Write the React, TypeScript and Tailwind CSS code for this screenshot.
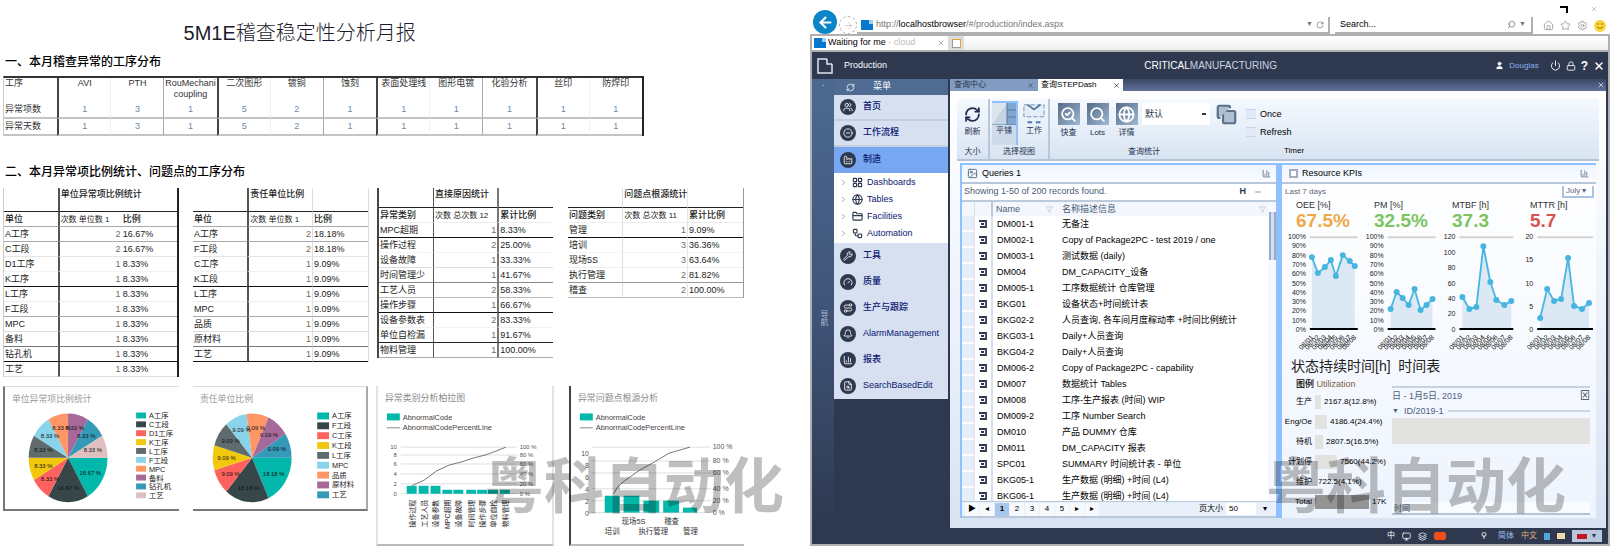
import React from "react";
import {
  ArrowLeft, ArrowRight, X, RotateCw, Search, Home, Star, Settings, User, Power, Lock,
  RefreshCw, Globe, FolderClosed, LayoutGrid, Wrench, Gauge, Route, Bell, BarChart3,
  FileSearch, Users, CircleMinus, Factory, Image as ImageIcon, Filter, Minus, Layers,
  ChevronRight, Monitor, CopyPlus, SearchCheck, Workflow,
} from "lucide-react";

const COLORS = ["#01b8aa", "#374649", "#fd625e", "#f2c80f", "#5f6b6d", "#8ad4eb", "#fe9666", "#a66999", "#3599b8", "#dfbfbf"];

const steps = ["AVI", "PTH", "RouMechani coupling", "二次图形", "镀铜", "蚀刻", "表面处理线", "图形电镀", "化验分析", "丝印", "防焊印"];
const counts = [1, 3, 1, 5, 2, 1, 1, 1, 1, 1, 1];

type Row = [string, number, string];
type Stat = { title: string; head: [string, string, string]; rows: Row[]; tall: boolean; grid: string; lines: string[] };

const stats: Stat[] = [
  {
    title: "单位异常项比例统计", head: ["单位", "次数 单位数 1", "比例"], tall: true, grid: "border-l border-l-[#ccc] border-r-2 border-r-[#222]",
    rows: [["A工序", 2, "16.67%"], ["C工段", 2, "16.67%"], ["D1工序", 1, "8.33%"], ["K工序", 1, "8.33%"], ["L工序", 1, "8.33%"], ["F工段", 1, "8.33%"], ["MPC", 1, "8.33%"], ["备料", 1, "8.33%"], ["钻孔机", 1, "8.33%"], ["工艺", 1, "8.33%"]],
    lines: ["border-b-[#aaa]", "border-b-[#aaa]", "border-b-[#e5e5e5]", "border-b-[#f2f2f2]", "border-b-[#111]", "border-b-[#eee]", "border-b-[#aaa]", "border-b-[#ddd]", "border-b-[#777]", "border-b-[#111]", "border-b-[#ddd]"],
  },
  {
    title: "责任单位比例", head: ["单位", "次数 单位数 1", "比例"], tall: true, grid: "border-r border-r-[#ddd]",
    rows: [["A工序", 2, "18.18%"], ["F工段", 2, "18.18%"], ["C工序", 1, "9.09%"], ["K工段", 1, "9.09%"], ["L工序", 1, "9.09%"], ["MPC", 1, "9.09%"], ["品质", 1, "9.09%"], ["原材料", 1, "9.09%"], ["工艺", 1, "9.09%"]],
    lines: ["border-b-[#aaa]", "border-b-[#aaa]", "border-b-[#e5e5e5]", "border-b-[#f2f2f2]", "border-b-[#111]", "border-b-[#eee]", "border-b-[#aaa]", "border-b-[#ddd]", "border-b-[#777]", "border-b-[#111]"],
  },
  {
    title: "直接原因统计", head: ["异常类别", "次数 总次数 12", "累计比例"], tall: false, grid: "border-l-2 border-l-[#444]",
    rows: [["MPC超期", 1, "8.33%"], ["操作过程", 2, "25.00%"], ["设备故障", 1, "33.33%"], ["时间管理少", 1, "41.67%"], ["工艺人员", 2, "58.33%"], ["操作步骤", 1, "66.67%"], ["设备参数表", 2, "83.33%"], ["单位自检漏", 1, "91.67%"], ["物料管理", 1, "100.00%"]],
    lines: ["border-b-[#eee]", "border-b-[#111]", "border-b-[#f5f5f5]", "border-b-[#ddd]", "border-b-[#888]", "border-b-[#bbb]", "border-b-[#111]", "border-b-[#f2f2f2]", "border-b-[#222]", "border-b-[#aaa]"],
  },
  {
    title: "问题点根源统计", head: ["问题类别", "次数 总次数 11", "累计比例"], tall: false, grid: "border-r border-r-[#999]",
    rows: [["管理", 1, "9.09%"], ["培训", 3, "36.36%"], ["现场5S", 3, "63.64%"], ["执行管理", 2, "81.82%"], ["稽查", 2, "100.00%"]],
    lines: ["border-b-[#eee]", "border-b-[#111]", "border-b-[#f5f5f5]", "border-b-[#eee]", "border-b-[#999]", "border-b-[#bbb]"],
  },
];

function StatTable({ s, wide }: { s: Stat; wide: boolean }) {
  const mid = s.tall ? "border-l-2 border-l-[#555]" : wide ? "border-l border-l-[#555]" : "border-l border-l-[#ddd]";
  const last = s.tall ? (s.rows.length === 10 ? "" : "border-l border-l-[#ddd]") : wide ? "border-l-2 border-l-[#777]" : "border-l border-l-[#e5e5e5]";
  return (
    <table className={`w-full table-fixed border-separate border-spacing-0 text-[9px] leading-[13px] text-[#222] ${s.grid}`}>
      <colgroup>
        <col className="w-[31%]" />
        <col className="w-[37%]" />
        <col className="w-[32%]" />
      </colgroup>
      <thead>
        <tr className={s.tall ? "h-[24px]" : "h-[20px]"}>
          <th className="border-b border-b-[#222] p-0" />
          <th className={`whitespace-nowrap border-b border-b-[#222] p-0 pl-px text-left align-top font-medium ${mid}`}>{s.title}</th>
          <th className={`border-b border-b-[#222] p-0 ${last}`} />
        </tr>
        <tr className="h-[15px]">
          <th className={`whitespace-nowrap border-b p-0 pl-px text-left font-medium ${s.lines[0]}`}>{s.head[0]}</th>
          <th className={`whitespace-nowrap border-b p-0 pl-px text-left text-[8px] font-normal ${s.lines[0]} ${mid}`}>{s.head[1]}</th>
          <th className={`whitespace-nowrap border-b p-0 pl-px text-left font-medium ${s.lines[0]} ${last}`}>{s.head[2]}</th>
        </tr>
      </thead>
      <tbody>
        {s.rows.map((r, i) => (
          <tr key={r[0]} className="h-[15px]">
            <td className={`whitespace-nowrap border-b p-0 pl-px ${s.lines[i + 1]}`}>{r[0]}</td>
            <td className={`border-b p-0 pr-px text-right text-[#7a6a5a] ${s.lines[i + 1]} ${mid}`}>{r[1]}</td>
            <td className={`border-b p-0 pl-px ${s.lines[i + 1]} ${last}`}>{r[2]}</td>
          </tr>
        ))}
      </tbody>
    </table>
  );
}

function Pie({ title, rows, step, sx, sw }: { title: string; rows: Row[]; step: number; sx: number; sw: number }) {
  const total = rows.reduce((a, r) => a + r[1], 0);
  const cx = sx === 133 ? 64 : 60;
  const cy = 71;
  let at = 0;
  const parts = rows.map((r, i) => {
    const a0 = (at / total) * Math.PI * 2;
    at += r[1];
    const a1 = (at / total) * Math.PI * 2;
    const m = (a0 + a1) / 2;
    return { r, i, m, d: `M${cx} ${cy}L${cx + 40 * Math.cos(a0)} ${cy + 45 * Math.sin(a0)}A40 45 0 0 1 ${cx + 40 * Math.cos(a1)} ${cy + 45 * Math.sin(a1)}Z` };
  });
  return (
    <svg viewBox="0 0 176 122" className="block h-[122px] w-full" role="img" aria-label={title}>
      <text x="7" y="14" fontSize="9" fill="#9a9a9a">{title}</text>
      {parts.map((p) => <path key={p.i} d={p.d} fill={COLORS[p.i]} />)}
      {parts.map((p) => (
        <text key={p.i} x={cx + 26 * Math.cos(p.m)} y={cy + 2 + 31 * Math.sin(p.m)} fontSize="6" textAnchor="middle" fill="#111">{p.r[2].replace("%", " %")}</text>
      ))}
      {rows.map((r, i) => (
        <g key={i}>
          <rect x={sx} y={25 + i * step} width={sw} height={step - 3} fill={COLORS[i]} />
          <text x={sx + sw + 3} y={31 + i * step} fontSize="7.5" fill="#222">{r[0]}</text>
        </g>
      ))}
    </svg>
  );
}

function ParetoHead({ title }: { title: string }) {
  return (
    <g>
      <text x="7" y="14" fontSize="9" fill="#8a8a8a">{title}</text>
      <rect x="9" y="27" width="13" height="7" fill="#01b8aa" />
      <text x="25" y="34" fontSize="7.5" fill="#444">AbnormalCode</text>
      <path d="M9 41.500h13" stroke="#888" />
      <text x="25" y="44" fontSize="7.5" fill="#444">AbnormalCodePercentLine</text>
    </g>
  );
}

function ParetoA() {
  const xs = [29, 41, 53, 65, 76, 89, 100, 111, 123];
  const names = ["操作过程", "工艺人员", "设备参数", "MPC超期", "设备故障", "时间管理", "操作步骤", "单位自检", "物料管理"];
  return (
    <svg viewBox="0 0 175 158" className="block h-[158px] w-full" role="img" aria-label="异常类别分析">
      <ParetoHead title="异常类别分析柏拉图" />
      {[61, 69, 78, 88, 98, 108].map((y, i) => (
        <g key={y}>
          <path d={`M23 ${y}h117`} stroke="#dedede" />
          <text x="19" y={y + 2} fontSize="6" textAnchor="end" fill="#555">{10 - i * 2}</text>
          <text x="143" y={y + 2} fontSize="6" fill="#555">{`${100 - i * 20} %`}</text>
        </g>
      ))}
      {xs.map((x, i) => (
        <g key={x}>
          <rect x={x} y={i < 3 ? 100 : 104} width="10" height={i < 3 ? 8 : 4} fill="#01b8aa" />
          <text transform={`translate(${x + 8} 114) rotate(-90)`} fontSize="7" textAnchor="end" fill="#222">{names[i]}</text>
        </g>
      ))}
      <path d="M34 100L47 94L59 85L72 79L84 76L96 72L108 69L119 65L129 61" fill="none" stroke="#555" strokeWidth=".8" />
    </svg>
  );
}

function ParetoB() {
  const bars = [[34, 110, 15], [53, 110, 16], [73, 115, 16], [93, 115, 16], [113, 122, 14]];
  return (
    <svg viewBox="0 0 175 158" className="block h-[158px] w-full" role="img" aria-label="问题点根源分析">
      <ParetoHead title="异常问题点根源分析" />
      {[61, 75, 87, 103, 115, 127].map((y, i) => (
        <g key={y}>
          <path d={`M21 ${y}h120`} stroke="#dedede" />
          <text x="143" y={y + 2} fontSize="7" fill="#555">{`${100 - i * 20} %`}</text>
        </g>
      ))}
      {[67, 79, 91, 103, 115, 127].map((y, i) => <text key={y} x="18" y={y + 3} fontSize="7" textAnchor="end" fill="#555">{10 - i * 2}</text>)}
      {bars.map(([x, y, w]) => <rect key={x} x={x} y={y} width={w} height={127 - y} fill="#01b8aa" />)}
      <path d="M43 108L47 101L54 95L68 85L84 76L99 67L120 61" fill="none" stroke="#555" strokeWidth=".8" />
      <g fontSize="7.5" fill="#333">
        <text x="51" y="139">现场5S</text>
        <text x="94" y="139">稽查</text>
        <text x="34" y="149">培训</text>
        <text x="68" y="149">执行管理</text>
        <text x="113" y="149">管理</text>
      </g>
    </svg>
  );
}

function Watermark({ place }: { place: string }) {
  return <div aria-hidden="true" className={`pointer-events-none absolute whitespace-nowrap text-[60px] font-bold leading-[60px] text-black/25 ${place}`}>粤科自动化</div>;
}

function Report() {
  return (
    <section className="relative min-w-0 pt-[20px]">
      <h1 className="w-[74%] text-center text-[20px] font-light leading-[26px] text-[#1c1c2c]">5M1E稽查稳定性分析月报</h1>
      <h2 className="mt-[8px] pl-[5px] text-[12px] font-medium leading-[17px]">一、本月稽查异常的工序分布</h2>
      <div className="pl-[3px] pr-[166px] pt-[5px]">
        <table className="w-full table-fixed border-separate border-spacing-0 border-l border-r-2 border-t-2 border-l-[#ccc] border-r-[#222] border-t-[#333] text-[9px] leading-[11px] text-[#333]">
          <thead>
            <tr className="h-[24px] align-top">
              <th className="p-0 pl-px text-left font-normal">工序</th>
              {steps.map((s, i) => <th key={s} className={`p-0 text-center font-normal ${i % 3 === 1 ? "border-l border-l-[#f0f0f0]" : i % 3 === 0 ? "border-l-2 border-l-[#444]" : "border-l border-l-[#aaa]"}`}>{s}</th>)}
            </tr>
          </thead>
          <tbody>
            {["异常项数", "异常天数"].map((n) => (
              <tr key={n} className="h-[17px]">
                <td className="border-b-2 border-b-[#c4c4c4] p-0 pl-px">{n}</td>
                {counts.map((c, i) => <td key={i} className={`border-b-2 border-b-[#c4c4c4] p-0 text-center text-[#6a8bab] ${i % 3 === 1 ? "border-l border-l-[#f0f0f0]" : i % 3 === 0 ? "border-l-2 border-l-[#444]" : "border-l border-l-[#aaa]"}`}>{c}</td>)}
              </tr>
            ))}
          </tbody>
        </table>
      </div>
      <h2 className="mt-[28px] pl-[5px] text-[12px] font-medium leading-[17px]">二、本月异常项比例统计、问题点的工序分布</h2>
      <div className="mt-[7px] flex h-[198px] items-start pl-[3px] pr-[66px]">
        {stats.map((s, i) => (
          <div key={s.title} className={`min-w-0 flex-1 ${["", "ml-[14px]", "ml-[8px]", "ml-[15px]"][i]}`}>
            <StatTable s={s} wide={i === 2} />
          </div>
        ))}
      </div>
      <div className="flex items-start pl-[3px] pr-[66px]">
        <div className="min-w-0 flex-1 border-b-2 border-l-2 border-t border-b-[#777] border-l-[#777] border-t-[#ddd]"><Pie title="单位异常项比例统计" rows={stats[0].rows} step={9} sx={133} sw={10} /></div>
        <div className="ml-[14px] min-w-0 flex-1 border-b-2 border-r-2 border-t border-b-[#777] border-r-[#aaa] border-t-[#ddd]"><Pie title="责任单位比例" rows={stats[1].rows} step={10} sx={126} sw={12} /></div>
        <div className="ml-[8px] min-w-0 flex-1 border-x-2 border-b-2 border-x-[#e2e2e2] border-b-[#bbb]"><ParetoA /></div>
        <div className="ml-[15px] min-w-0 flex-1 border-b-2 border-l-2 border-b-[#bbb] border-l-[#444]"><ParetoB /></div>
      </div>
      <Watermark place="right-[26px] bottom-[38px]" />
    </section>
  );
}

const menuTop = [["首页", Users], ["工作流程", CircleMinus], ["制造", Factory]] as const;
const menuSub = [["Dashboards", LayoutGrid], ["Tables", Globe], ["Facilities", FolderClosed], ["Automation", Workflow]] as const;
const menuRest = [["工具", Wrench], ["质量", Gauge], ["生产与跟踪", Route], ["AlarmManagement", Bell], ["报表", BarChart3], ["SearchBasedEdit", FileSearch]] as const;

function MenuItem({ label, Icon, active }: { label: string; Icon: React.ElementType; active?: boolean }) {
  return (
    <a href="#menu" className={`flex h-[26px] items-center gap-[7px] overflow-hidden whitespace-nowrap pl-[6px] text-[9px] font-medium text-[#0b1570] ${active ? "bg-[#77a7f0]" : "bg-[#d6e0f1]"}`}>
      <span className="flex size-[16px] shrink-0 items-center justify-center rounded-full bg-[#2e3950] text-white"><Icon size={10} /></span>
      {label}
    </a>
  );
}

const records = [
  ["DM001-1", "无备注"], ["DM002-1", "Copy of Package2PC - test 2019 / one"], ["DM003-1", "测试数据 (daily)"], ["DM004", "DM_CAPACITY_设备"],
  ["DM005-1", "工序数据统计 仓库管理"], ["BKG01", "设备状态+时间统计表"], ["BKG02-2", "人员查询, 各车间月度稼动率 +时间比例统计"], ["BKG03-1", "Daily+人员查询"],
  ["BKG04-2", "Daily+人员查询"], ["DM006-2", "Copy of Package2PC - capability"], ["DM007", "数据统计 Tables"], ["DM008", "工序-生产报表 (时间) WIP"],
  ["DM009-2", "工序 Number Search"], ["DM010", "产品 DUMMY 仓库"], ["DM011", "DM_CAPACITY 报表"], ["SPC01", "SUMMARY 时间统计表 - 单位"],
  ["BKG05-1", "生产数据 (明细) +时间 (L4)"], ["BKG06-1", "生产数据 (明细) +时间 (L4)"],
];

function Records() {
  return (
    <section className="flex min-w-0 flex-1 flex-col border-l-2 border-r-2 border-t-2 border-[#8fc0ff] bg-white">
      <header className="flex h-[19px] items-center gap-[4px] border-b-2 border-[#b9c6da] bg-gradient-to-b from-[#eff5ff] to-[#f9fbff] px-[5px] text-[9px]">
        <ImageIcon size={11} className="text-[#50607a]" />
        <span className="flex-1">Queries 1</span>
        <BarChart3 size={9} className="text-[#50607a]" />
      </header>
      <div className="flex h-[18px] items-center gap-[8px] border-b-2 border-[#bccad9] px-[2px] text-[9px] text-[#4a5b75]">
        <span className="flex-1 whitespace-nowrap">Showing 1-50 of 200 records found.</span>
        <span className="font-bold text-[#2e3950]">H</span>
        <Minus size={8} className="mr-[12px]" />
      </div>
      <div className="flex h-[299px] overflow-hidden">
        <table className="w-full table-fixed border-separate border-spacing-0 self-start text-[9px] leading-[12px]">
          <colgroup>
            <col className="w-[13px]" />
            <col className="w-[18px]" />
            <col className="w-[66px]" />
            <col />
          </colgroup>
          <thead>
            <tr className="h-[14px] bg-[#f3f7fd] text-[#4a5b75]">
              <th aria-label="标记" className="border-r border-[#d5dfef] p-0" />
              <th aria-label="选择" className="border-r-2 border-[#bccad9] p-0" />
              <th className="p-0 pl-[3px] text-left font-normal"><span className="flex items-center justify-between pr-[6px]">Name<Filter size={7} className="text-[#a9bbd2]" /></span></th>
              <th className="p-0 pl-[3px] text-left font-normal"><span className="flex items-center justify-between pr-[2px]">名称描述信息<Filter size={7} className="text-[#a9bbd2]" /></span></th>
            </tr>
          </thead>
          <tbody>
            {records.map((r) => (
              <tr key={r[0]} className="h-[16px]">
                <td className="border-b-2 border-r-2 border-b-white border-r-[#e5e5ea] bg-[#e6edfb] p-0" />
                <td className="border-r-2 border-[#d3e1f5] p-0">
                  <svg viewBox="0 0 8 8" className="mx-auto size-[8px]" aria-hidden="true"><path d="M0 1h7v6H1M2 4h3" fill="none" stroke="#2e3950" strokeWidth="1.800" /></svg>
                </td>
                <td className="whitespace-nowrap p-0 pl-[4px]">{r[0]}</td>
                <td className="overflow-hidden whitespace-nowrap p-0 pl-[3px]">{r[1]}</td>
              </tr>
            ))}
          </tbody>
        </table>
        <div className="flex w-[8px] shrink-0 flex-col items-center bg-[#f5f8fe] pt-[10px]"><div className="h-[48px] w-[7px] border-x-2 border-[#9aabc4] bg-[#d3dff0]" /></div>
      </div>
      <footer className="flex h-[17px] items-center gap-px border-b-2 border-t border-[#b9c9dd] bg-[#e9f0fa] px-[3px] text-[8px]">
        {["▶", "◂", "1", "2", "3", "4", "5", "▸", "▸"].map((p, i) => (
          <button key={i} className={`h-[13px] w-[14px] leading-[12px] ${i === 2 ? "bg-[#a9c6ec] font-bold" : "bg-[#f7f9fd]"}`}>{p}</button>
        ))}
        <label className="ml-auto flex items-center gap-[3px] text-[8px]">页大小<input defaultValue="50" className="h-[12px] w-[30px] bg-white px-[3px] text-[8px]" /></label>
        <button className="mx-[6px]">▾</button>
      </footer>
    </section>
  );
}

type Kpi = { label: string; value: string; tone: string; x0: number; x1: number; ticks: string[]; pts: number[][] };
const pct = ["100%", "90%", "80%", "70%", "60%", "50%", "40%", "30%", "20%", "10%", "0%"];
const kpis: Kpi[] = [
  { label: "OEE [%]", value: "67.5%", tone: "text-[#f0a94a]", x0: 28, x1: 76, ticks: pct, pts: [[30, 25], [36, 41], [43, 35], [49, 28], [54, 44], [61, 23], [68, 29], [73, 34]] },
  { label: "PM [%]", value: "32.5%", tone: "text-[#7cc462]", x0: 106, x1: 154, ticks: pct, pts: [[109, 77], [115, 60], [121, 66], [127, 73], [133, 57], [139, 78], [145, 73], [151, 67]] },
  { label: "MTBF [h]", value: "37.3", tone: "text-[#7cc462]", x0: 178, x1: 232, ticks: ["120", "100", "80", "60", "40", "20", "0"], pts: [[181, 65], [188, 77], [195, 75], [202, 14], [209, 50], [215, 68], [223, 73], [230, 69]] },
  { label: "MTTR [h]", value: "5.7", tone: "text-[#d9534f]", x0: 256, x1: 312, ticks: ["20", "15", "10", "5", "0"], pts: [[259, 86], [266, 57], [273, 69], [280, 67], [287, 26], [293, 74], [301, 77], [308, 71]] },
];

function KpiCharts() {
  return (
    <svg viewBox="0 0 315 125" className="block h-[125px] w-full" role="img" aria-label="KPI">
      {kpis.map((k) => (
        <g key={k.label} transform="translate(0 1)">
          <path d={`M${k.x0} 5h${k.x1 - k.x0}`} stroke="#d3d3d3" strokeWidth="2" />
          <path d={`M${k.pts.map((p) => p.join(" ")).join("L")}L${k.pts[7][0]} 96L${k.pts[0][0]} 96Z`} fill="#dce9f5" />
          <path d={`M${k.x0} 97h${k.x1 - k.x0}`} stroke="#000" strokeWidth="2" />
          <path d={`M${k.pts.map((p) => p.join(" ")).join("L")}`} fill="none" stroke="#46b5e0" strokeWidth="1.800" />
          {k.pts.map((p) => <circle key={p[0]} cx={p[0]} cy={p[1]} r="3" fill="#46b5e0" />)}
          {k.ticks.map((t, i) => <text key={t} x={k.x0 - 4} y={7 + (i * 93) / (k.ticks.length - 1)} fontSize="7" fontWeight="500" textAnchor="end" fill="#222">{t}</text>)}
          {k.pts.map((p, i) => <text key={p[0]} transform={`translate(${p[0] + 2} 106) rotate(-45)`} fontSize="7" textAnchor="end" fill="#111">{`08/0${i + 1}`}</text>)}
        </g>
      ))}
    </svg>
  );
}

const states = [
  ["生产", "w-[6px] bg-[#e2e2e0]", "2167.8(12.8%)"], ["Eng/Oe", "w-[12px] bg-[#e2e2e0]", "4186.4(24.4%)"], ["待机", "w-[8px] bg-[#e2e2e0]", "2807.5(16.5%)"],
  ["计划停", "w-[22px] bg-[#e2e2e0]", "7560(44.2%)"], ["维护", "w-0", "722.5(4.1%)"], ["Total", "w-[54px] bg-[#949494]", "17K"],
];

function Kpis() {
  return (
    <section className="flex min-w-0 flex-1 flex-col border-l-2 border-t-2 border-[#8fc0ff] bg-gradient-to-b from-white to-[#eef4fe]">
      <header className="flex h-[19px] items-center gap-[4px] border-b-2 border-[#b9c6da] bg-gradient-to-b from-[#eff5ff] to-[#f9fbff] px-[7px] text-[9px]">
        <span className="size-[9px] border-2 border-[#a3adbd] bg-white" />
        <span className="flex-1">Resource KPIs</span>
        <BarChart3 size={9} className="text-[#50607a]" />
      </header>
      <div className="flex h-[16px] items-center justify-between pl-[3px] pr-[2px] text-[8px] text-[#5a6478]">
        <span>Last 7 days</span>
        <select aria-label="周期" className="h-[12px] w-[32px] appearance-none border-x-2 border-b-2 border-[#a9c3e3] bg-white px-[2px] text-[8px] leading-[10px]"><option>July ▾</option></select>
      </div>
      <div className="grid grid-cols-[78fr_78fr_78fr_66fr] pl-[14px]">
        {kpis.map((k) => (
          <div key={k.label}>
            <div className="text-[9px] font-medium leading-[11px] text-[#333]">{k.label}</div>
            <div className={`text-[19px] font-bold leading-[20px] ${k.tone}`}>{k.value}</div>
          </div>
        ))}
      </div>
      <KpiCharts />
      <h3 className="pl-[9px] text-[14px] leading-[20px] text-[#222]">状态持续时间[h]&nbsp; 时间表</h3>
      <div className="flex flex-1">
        <div className="w-[108px] shrink-0 text-[9px] leading-[12px]">
          <div className="flex h-[16px] items-center whitespace-nowrap pl-[14px] font-medium">图例&nbsp;<span className="font-normal text-[#7a6048]">Utilization</span></div>
          {states.map((s) => (
            <div key={s[0]} className="flex h-[20px] items-center whitespace-nowrap">
              <span className="w-[30px] shrink-0 text-right text-[8px]">{s[0]}</span>
              <span className={`ml-[3px] h-[14px] shrink-0 ${s[1]}`} />
              <span className="ml-[3px] text-[8px]">{s[2]}</span>
            </div>
          ))}
        </div>
        <div className="flex min-w-0 flex-1 flex-col pl-[2px] pr-[6px] pt-[10px] text-[9px] leading-[12px] text-[#4b6080]">
          <div className="flex h-[17px] items-center justify-between border-t-2 border-[#c6d2e2]"><span>日 - 1月5日, 2019</span><span className="text-[10px] text-[#2e3950]">⊠</span></div>
          <div className="flex h-[15px] items-center gap-[5px]"><span className="text-[7px]">▼</span>ID/2019-1<span className="h-[2px] flex-1 bg-[#ccd7e6]" /></div>
          <div className="h-[26px] bg-[#e2e2e0]" />
          <input aria-label="时间" defaultValue="时间" className="mt-auto mb-[3px] h-[13px] w-full border-b-2 border-[#b5c3d3] bg-[#f8fbff] pl-[2px] text-[8px]" />
        </div>
      </div>
    </section>
  );
}

function Ribbon() {
  const lens = [["快查", SearchCheck], ["Lots", Search], ["详情", Globe]] as const;
  return (
    <div className="mx-[7px] mt-[8px] flex h-[62px] border-b-2 border-[#b6c4d6] bg-gradient-to-b from-[#f5f9ff] to-[#d8e4f2] text-[8px] leading-[11px] text-[#23304c]">
      <div className="flex w-[33px] flex-col items-center justify-between border-r-2 border-[#b9c7da] pb-[2px] pt-[7px]">
        <button className="flex flex-col items-center gap-[3px]"><RefreshCw size={17} strokeWidth={2.500} />刷新</button>
        <span>大小</span>
      </div>
      <div className="flex w-[60px] flex-col items-center justify-between border-r-2 border-[#b9c7da] pb-[2px] pt-[2px]">
        <div className="flex gap-[4px]">
          <button className="flex h-[44px] w-[26px] flex-col items-center border-r-2 border-t-2 border-[#8fc0ff] bg-[#cfdbea]">
            <svg viewBox="0 0 24 22" className="h-[22px] w-[24px]" aria-hidden="true"><path d="M0 0h24v22H0z" fill="#dce5ee" /><path d="M15 0h9v22h-9z" fill="#7fa6cd" /><path d="M0 22L15 0v22z" fill="#c6d3e0" /><path d="M15 0v22M15 7h9M15 14h9M0 22h24" stroke="#557ba3" /></svg>
            平铺
          </button>
          <button className="flex h-[44px] w-[24px] flex-col items-center pt-[2px]">
            <svg viewBox="0 0 24 22" className="h-[22px] w-[22px]" aria-hidden="true"><path d="M1 1h22v13H1z" fill="#e4eef8" stroke="#6e8db0" strokeDasharray="5 2" /><path d="M5 1l7 5 7-5M5 20h5M14 20h5" fill="none" stroke="#4e789f" strokeWidth="2" /></svg>
            工作
          </button>
        </div>
        <span>选择视图</span>
      </div>
      <div className="flex w-[188px] flex-col items-center justify-between pb-[2px] pt-[4px]">
        <div className="flex w-full items-start pl-[4px]">
          {lens.map(([n, Icon]) => (
            <button key={n} className="flex w-[29px] flex-col items-center gap-[2px] whitespace-nowrap">
              <span className="flex size-[22px] items-center justify-center bg-gradient-to-br from-[#566b87] to-[#9fb9d4] text-white"><Icon size={17} strokeWidth={2.500} /></span>
              {n}
            </button>
          ))}
          <select aria-label="查询条件" className="ml-px h-[22px] w-[68px] appearance-none bg-white bg-[linear-gradient(#2e3950,#2e3950)] bg-[length:4px_2px] bg-[position:60px_10px] bg-no-repeat pl-[3px] text-[9px]"><option>默认</option></select>
          <button aria-label="图层" className="ml-[5px] flex h-[22px] w-[22px] shrink-0 items-center justify-center text-[#5c7189]"><CopyPlus size={21} strokeWidth={2.500} fill="#aebfd2" /></button>
        </div>
        <span>查询统计</span>
      </div>
      <div className="flex flex-1 flex-col pl-[8px] pt-[10px] text-[9px] text-black">
        {["Once", "Refresh"].map((t) => (
          <label key={t} className="flex h-[18px] items-start gap-[4px]"><input type="checkbox" className="size-[10px] appearance-none border-y border-[#c8d5f0] bg-[#e2e9f9]" />{t}</label>
        ))}
        <span className="ml-[38px] text-[8px]">Timer</span>
      </div>
    </div>
  );
}

function Browser() {
  return (
    <section className="relative min-w-0 pr-[2px]">
      <div className="flex h-[16px] items-end justify-end gap-[22px] pb-[3px] pr-[12px]">
        <svg viewBox="0 0 8 7" className="h-[7px] w-[8px]" aria-hidden="true"><path d="M0 1h7v6" fill="none" stroke="#000" strokeWidth="2" /></svg>
        <X size={8} className="text-[#aaa]" />
      </div>
      <div className="flex h-[18px] items-end text-[9px]">
        <button aria-label="返回" className="ml-[3px] flex size-[24px] shrink-0 items-center justify-center rounded-full bg-[#0a86c8] text-white"><ArrowLeft size={17} strokeWidth={3} /></button>
        <button aria-label="前进" className="ml-[2px] flex size-[18px] shrink-0 items-center justify-center rounded-full border border-dashed border-[#aaa] text-[#ccc]"><ArrowRight size={11} /></button>
        <div className="flex h-[17px] flex-1 items-center gap-[3px] border-b-2 border-r-2 border-[#b0b0b0] pl-[4px] pr-[4px]">
          <span className="h-[10px] w-[12px] shrink-0 bg-[#0878cf]"><span className="ml-auto block size-[4px] bg-[#9bcdf5]" /></span>
          <span className="flex-1 whitespace-nowrap text-[#777]">http://<b className="font-medium text-black">localhostbrowser</b>/#/production/index.aspx</span>
          <span className="text-[7px] text-[#777]">▼</span>
          <RotateCw size={8} className="text-[#777]" />
        </div>
        <div className="ml-[5px] flex h-[17px] w-[198px] shrink-0 items-center border-b-2 border-r-2 border-[#b0b0b0] px-[5px]">
          <input aria-label="Search" placeholder="Search..." className="min-w-0 flex-1 text-[9px] placeholder:text-black" />
          <Search size={9} className="-scale-x-100 text-[#777]" />
          <span className="ml-[3px] text-[7px] text-[#777]">▼</span>
        </div>
        <div className="flex h-[17px] w-[77px] shrink-0 items-center justify-end gap-[6px] pr-[4px] text-[#a0a0a0]">
          <Home size={11} /><Star size={11} /><Settings size={11} />
          <svg viewBox="0 0 12 12" className="size-[12px]" aria-hidden="true"><circle cx="6" cy="6" r="6" fill="#fbd33b" /><path d="M3 4h2M7 4h2M3 7q3 3 6 0" stroke="#9a7910" fill="none" /></svg>
        </div>
      </div>
      <div className="border-2 border-[#b0b0b0]">
        <div className="flex h-[14px] bg-gradient-to-b from-white to-[#efefef] text-[9px]">
          <div className="flex w-[136px] items-center gap-[2px] bg-white pl-[2px] pr-[3px]">
            <span className="h-[10px] w-[12px] bg-[#0878cf]"><span className="ml-auto block size-[4px] bg-[#9bcdf5]" /></span>
            <span className="flex-1 whitespace-nowrap">Waiting for me <span className="text-[#bbb]">- cloud</span></span>
            <X size={8} className="text-[#888]" />
          </div>
          <button aria-label="新标签页" className="flex w-[16px] items-center justify-center bg-[#dcdcdc]"><span className="size-[9px] border border-r-[#e8a530] border-t-[#e8a530] border-b-[#999] border-l-[#999] bg-white" /></button>
        </div>
        <div className="border-t-2 border-[#b0b0b0] bg-[#2e3950]">
          <header className="flex h-[27px] items-center text-white">
            <svg viewBox="0 0 16 16" className="ml-[5px] size-[16px]" aria-hidden="true"><path d="M10 1H1v14h14V6M10 1v5h5" fill="none" stroke="#dfe6f0" strokeWidth="1.500" /></svg>
            <span className="ml-[11px] w-[120px] text-[9px] font-medium">Production</span>
            <span className="flex-1 pr-[38px] text-center text-[10px]"><b className="font-medium">CRITICAL</b><span className="text-[#cbd3e0]">MANUFACTURING</span></span>
            <div className="flex items-center gap-[5px] pr-[3px] text-[8px] text-[#8fb0f0]">
              <User size={9} fill="white" className="text-white" />Douglas
              <Power size={11} className="ml-[6px] text-white" /><Lock size={10} className="text-white" /><b className="text-[12px] text-white">?</b><X size={12} strokeWidth={3} className="text-white" />
            </div>
          </header>
          <div className="flex h-[449px]">
            <div className="flex w-[22px] shrink-0 flex-col items-center bg-gradient-to-b from-[#4c6a90] via-[#40557a] to-[#2e3950] text-[8px] text-[#aebbd0]">
              <span className="mt-[1px] text-white">·</span>
              <span className="mt-[218px] [writing-mode:vertical-rl]">导航</span>
            </div>
            <nav className="w-[114px] shrink-0">
              <div className="flex h-[16px] items-center gap-[18px] bg-[#4f6b92] pl-[12px] text-[9px] text-white"><RefreshCw size={9} />菜单</div>
              <div className="flex flex-col divide-y-2 divide-[#c3cfdf]">
                {menuTop.map(([l, I], i) => <MenuItem key={l} label={l} Icon={I} active={i === 2} />)}
              </div>
              <div className="bg-white py-px">
                {menuSub.map(([l, I]) => (
                  <a key={l} href="#sub" className="flex h-[17px] items-center gap-[4px] pl-[5px] text-[9px] text-[#0b1570]">
                    <ChevronRight size={9} className="text-[#888]" /><I size={11} strokeWidth={2.500} className="text-[#2e3950]" />{l}
                  </a>
                ))}
              </div>
              {menuRest.map(([l, I]) => <MenuItem key={l} label={l} Icon={I} />)}
            </nav>
            <main className="ml-[2px] mr-[2px] flex min-w-0 flex-1 flex-col bg-[#d8e3f2]">
              <div className="flex h-[12px] items-center whitespace-nowrap bg-gradient-to-b from-[#3a4764] to-[#61719a] text-[8px] leading-[12px]">
                <div className="flex h-full w-[88px] items-center justify-between bg-[#829cc1] px-[4px] text-[#26334d]"><span>查询中心</span><X size={7} /></div>
                <div className="flex h-full w-[85px] items-center justify-between bg-white px-[3px] text-black"><span>查询STEPDash</span><X size={7} /></div>
                <X size={8} className="ml-auto mr-px text-white" />
              </div>
              <div className="flex flex-1 flex-col bg-gradient-to-b from-white via-[#eef3fb] to-[#d8e3f2]">
                <Ribbon />
                <div className="mx-[10px] mb-[10px] mt-[2px] flex flex-1 gap-[2px] bg-[#8fc0ff]">
                  <Records />
                  <Kpis />
                </div>
              </div>
            </main>
          </div>
          <footer className="flex h-[16px] items-center justify-end gap-[7px] pr-[6px] text-[8px] text-white">
            <span>中</span><Monitor size={9} /><Layers size={9} /><span className="h-[8px] w-[12px] rounded-[2px] bg-[#f0521c]" />
            <span className="ml-[28px]">⚲</span><span className="ml-[4px] text-[#9fc0ea]">简体</span><span className="text-[#e5b07c]">中文</span><span className="h-[7px] w-[6px] bg-[#52a5dd]" /><span className="h-[6px] w-[8px] bg-[#f0d6ae]" />
            <button aria-label="语言" className="flex h-[12px] w-[30px] items-center justify-center gap-[4px] bg-[#b9c6db]"><span className="h-[5px] w-[10px] bg-[#c01722]" /><span className="text-[7px] text-[#2e3950]">▼</span></button>
          </footer>
        </div>
      </div>
      <Watermark place="right-[46px] bottom-[38px]" />
    </section>
  );
}

export default function App() {
  return (
    <div className='grid min-h-screen grid-cols-[810fr_802fr] overflow-hidden bg-white font-["Liberation_Sans","Noto_Sans_CJK_SC",sans-serif] text-black'>
      <Report />
      <Browser />
    </div>
  );
}
